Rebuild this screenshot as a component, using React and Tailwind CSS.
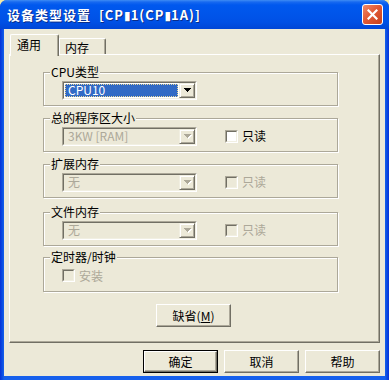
import React from "react";

const Tri = ({ disabled }) => (
  <svg width="9" height="6" viewBox="0 0 9 6" shapeRendering="crispEdges">
    {disabled && (
      <path d="M2 2h7v1h-1v1h-1v1h-1v1h-1v-1h-1v-1h-1v-1h-1z" fill="#fff" />
    )}
    <path
      d="M1 1h7v1h-1v1h-1v1h-1v1h-1v-1h-1v-1h-1v-1h-1z"
      fill={disabled ? "#ACA899" : "#000"}
    />
  </svg>
);

function Combo({ value, selected, disabled }) {
  return (
    <div className="w-[135px] h-[19px] flex border border-t-[#ACA899] border-l-[#ACA899] border-b-white border-r-white">
      <div
        className={`flex-1 flex border border-t-[#716F64] border-l-[#716F64] border-b-[#F1EFE2] border-r-[#F1EFE2] ${
          disabled ? "bg-[#ECE9D8]" : "bg-white"
        }`}
      >
        <div className="flex-1 flex p-[1px]">
          {selected ? (
            <div className="flex-1 flex items-center bg-[#316AC5] text-white pl-[2px] border border-dotted border-[#E8D89A] leading-none">
              {value}
            </div>
          ) : (
            <div
              className={`flex-1 flex items-center pl-[3px] leading-none ${
                disabled ? "text-[#ACA899]" : "text-black"
              }`}
            >
              {value}
            </div>
          )}
        </div>
        <div className="w-[16px] h-full flex items-center justify-center bg-[#ECE9D8] border border-t-[#F1EFE2] border-l-[#F1EFE2] border-r-[#716F64] border-b-[#716F64] shadow-[inset_1px_1px_0_#fff,inset_-1px_-1px_0_#ACA899]">
          <Tri disabled={disabled} />
        </div>
      </div>
    </div>
  );
}

function Check({ label, disabled, className = "" }) {
  return (
    <div className={`flex items-center ${className}`}>
      <div className="w-[13px] h-[13px] flex border border-t-[#ACA899] border-l-[#ACA899] border-b-white border-r-white">
        <div
          className={`flex-1 border border-t-[#716F64] border-l-[#716F64] border-b-[#F1EFE2] border-r-[#F1EFE2] ${
            disabled ? "bg-[#ECE9D8]" : "bg-white"
          }`}
        />
      </div>
      <span
        className={`ml-[4px] leading-none ${
          disabled ? "text-[#ACA899]" : "text-black"
        }`}
      >
        {label}
      </span>
    </div>
  );
}

function Group({ label, className = "", children }) {
  return (
    <div
      className={`relative w-[295px] h-[34px] border border-[#ACA899] shadow-[inset_1px_1px_0_#fff,1px_1px_0_#fff] ${className}`}
    >
      <div className="absolute top-[-8px] left-[6px] h-[14px] px-[1px] leading-[14px] bg-[#ECE9D8] text-black">
        {label}
      </div>
      <div className="h-full flex items-center pl-[18px] pt-[2px]">
        {children}
      </div>
    </div>
  );
}

function Btn({ children, def, className = "" }) {
  const inner = (
    <div className="w-full h-full flex items-center justify-center border border-t-white border-l-white border-r-[#716F64] border-b-[#716F64] shadow-[inset_-1px_-1px_0_#ACA899] leading-none">
      {children}
    </div>
  );
  return (
    <div
      className={`w-[75px] h-[23px] flex ${def ? "border border-black" : ""} ${className}`}
    >
      {inner}
    </div>
  );
}

export default function App() {
  return (
    <div className="w-[389px] h-[380px] bg-[#F3E9A6] font-['Noto_Sans_CJK_SC',sans-serif] text-[12px] text-black select-none">
      <div className="w-full h-full flex flex-col rounded-t-[7px] overflow-hidden bg-[linear-gradient(to_right,#0831D9_0px,#0A4AE0_2px,#1660EC_4px,#1660EC_385px,#0A4AE0_387px,#0831D9_389px)]">
        {/* Title bar */}
        <div className="h-[29px] shrink-0 flex items-center pl-[7px] pr-[6px] bg-[linear-gradient(to_bottom,#3F8CF3_0px,#1769F0_2px,#0058EE_5px,#0055EA_14px,#0050E5_22px,#0046D6_29px)]">
          <span className="text-white font-bold text-[13px] tracking-[1px] whitespace-pre leading-none [text-shadow:1px_1px_0_#0A2D8A]">
            设备类型设置  [CP<span className="font-['DejaVu_Sans',sans-serif] tracking-normal text-[12px]">▮</span>1(CP<span className="font-['DejaVu_Sans',sans-serif] tracking-normal text-[12px]">▮</span>1A)]
          </span>
          <div className="ml-auto w-[21px] h-[21px] rounded-[3px] border border-white bg-[linear-gradient(135deg,#F08A6A_0%,#E25A36_45%,#C6401C_100%)] flex items-center justify-center">
            <svg width="11" height="11" viewBox="0 0 11 11">
              <path
                d="M1.5 1.5L9.5 9.5M9.5 1.5L1.5 9.5"
                stroke="#fff"
                strokeWidth="2.2"
                strokeLinecap="square"
              />
            </svg>
          </div>
        </div>

        {/* Body */}
        <div className="flex-1 mx-[4px] mb-[4px] bg-[#ECE9D8] flex flex-col pt-[5px] pl-[5px] pr-[5px]">
          {/* Tabs */}
          <div className="flex items-end h-[20px] pl-[1px]">
            <div className="relative z-10 w-[49px] h-[22px] -mb-[2px] bg-[#ECE9D8] border-t border-l border-white border-r border-r-[#716F64] shadow-[inset_-1px_0_0_#ACA899] rounded-tl-[2px] rounded-tr-[2px] pl-[6px] pt-[3px] leading-[14px]">
              通用
            </div>
            <div className="w-[47px] h-[16px] bg-[#ECE9D8] border-t border-l border-white border-r border-r-[#716F64] shadow-[inset_-1px_0_0_#ACA899] rounded-tr-[2px] pl-[5px] pt-[2px] leading-[14px]">
              内存
            </div>
          </div>

          {/* Panel */}
          <div className="w-[371px] h-[289px] border border-t-white border-l-white border-r-[#716F64] border-b-[#716F64] shadow-[inset_-1px_-1px_0_#ACA899] pl-[33px] pt-[17px] flex flex-col">
            <Group label="CPU类型">
              <Combo value="CPU10" selected />
            </Group>
            <Group label="总的程序区大小" className="mt-[12px]">
              <Combo value="3KW [RAM]" disabled />
              <Check label="只读" className="ml-[28px]" />
            </Group>
            <Group label="扩展内存" className="mt-[12px]">
              <Combo value="无" disabled />
              <Check label="只读" disabled className="ml-[28px]" />
            </Group>
            <Group label="文件内存" className="mt-[14px]">
              <Combo value="无" disabled />
              <Check label="只读" disabled className="ml-[28px]" />
            </Group>
            <Group label="定时器/时钟" className="mt-[11px] h-[35px]">
              <Check label="安装" disabled />
            </Group>
            <Btn className="mt-[12px] ml-[113px]">
              缺省(<span className="underline">M</span>)
            </Btn>
          </div>

          {/* Bottom buttons */}
          <div className="flex justify-end gap-[6px] mt-[7px]">
            <Btn def>确定</Btn>
            <Btn>取消</Btn>
            <Btn>帮助</Btn>
          </div>
        </div>
      </div>
    </div>
  );
}
